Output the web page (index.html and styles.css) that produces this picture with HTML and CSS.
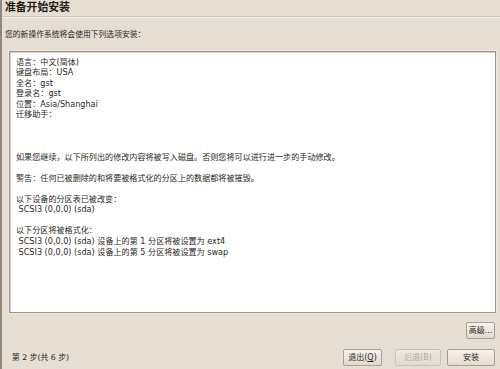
FILE: index.html
```html
<!DOCTYPE html>
<html lang="zh-CN">
<head>
<meta charset="utf-8">
<title>准备开始安装</title>
<link rel="stylesheet" href="styles.css">
</head>
<body>
<div class="window">
  <div class="header">准备开始安装</div>
  <div class="subtitle">您的新操作系统将会使用下列选项安装：</div>
  <div class="summary">
    <div class="line">语言：中文(简体)</div>
    <div class="line">键盘布局：USA</div>
    <div class="line">全名：gst</div>
    <div class="line">登录名：gst</div>
    <div class="line">位置：Asia/Shanghai</div>
    <div class="line">迁移助手：</div>
    <div class="line"></div>
    <div class="line"></div>
    <div class="line"></div>
    <div class="line">如果您继续，以下所列出的修改内容将被写入磁盘。否则您将可以进行进一步的手动修改。</div>
    <div class="line"></div>
    <div class="line">警告：任何已被删除的和将要被格式化的分区上的数据都将被摧毁。</div>
    <div class="line"></div>
    <div class="line">以下设备的分区表已被改变：</div>
    <div class="line"> SCSI3 (0,0,0) (sda)</div>
    <div class="line"></div>
    <div class="line">以下分区将被格式化：</div>
    <div class="line"> SCSI3 (0,0,0) (sda) 设备上的第 1 分区将被设置为 ext4</div>
    <div class="line"> SCSI3 (0,0,0) (sda) 设备上的第 5 分区将被设置为 swap</div>
  </div>
  <div class="advanced-row">
    <button class="btn btn-advanced">高级...</button>
  </div>
  <div class="footer">
    <div class="step">第 2 步(共 6 步)</div>
    <div class="actions">
      <button class="btn btn-quit">退出(<u>Q</u>)</button>
      <button class="btn btn-back" disabled>后退(B)</button>
      <button class="btn btn-install">安装</button>
    </div>
  </div>
</div>
</body>
</html>
```

FILE: styles.css
```css
html, body {
  margin: 0;
  padding: 0;
}

body {
  width: 500px;
  height: 369px;
  overflow: hidden;
  font-family: "DejaVu Sans", "Noto Sans CJK SC", sans-serif;
  color: #2b2723;
}

.window {
  width: 500px;
  height: 369px;
  box-sizing: border-box;
  border-left: 2px solid #8e8881;
  background: #e6ddd3;
  display: flex;
  flex-direction: column;
}

.header {
  height: 16px;
  line-height: 16px;
  padding-left: 3px;
  font-size: 10.8px;
  font-weight: bold;
  color: #1e1b18;
  border-bottom: 1px solid #cfc5b9;
  box-shadow: 0 1px 0 #f3eee8;
}

.subtitle {
  margin-top: 12px;
  padding-left: 3px;
  font-size: 7.8px;
  line-height: 11px;
  height: 11px;
}

.summary {
  margin: 11px 4px 0 7px;
  height: 262px;
  box-sizing: border-box;
  border: 1px solid #9b958e;
  box-shadow: 0 0 0 1px #efe9e2, inset 1px 1px 0 #d9d2c9;
  background: #ffffff;
  padding: 4.7px 6px 0 6px;
  font-size: 8.1px;
}

.line {
  height: 10.56px;
  line-height: 10.56px;
  white-space: pre;
}

.advanced-row {
  display: flex;
  justify-content: flex-end;
  margin-top: 9px;
  padding-right: 5px;
}

.btn {
  font-family: "DejaVu Sans", "Noto Sans CJK SC", sans-serif;
  font-size: 8px;
  color: #2b2723;
  height: 17px;
  padding: 0;
  box-sizing: border-box;
  border: 1px solid #a9a096;
  border-radius: 2px;
  background: linear-gradient(#f5f1ec, #e2dad0);
  line-height: 15px;
}

.btn u {
  text-decoration-thickness: 1px;
}

.btn-advanced {
  width: 29px;
}

.footer {
  display: flex;
  align-items: center;
  justify-content: space-between;
  margin-top: 10px;
  padding: 0 5px 0 10px;
}

.step {
  font-size: 7.8px;
  line-height: 17px;
}

.actions {
  display: flex;
  gap: 0;
}

.btn-quit {
  width: 39px;
  margin-right: 13px;
}

.btn-back {
  width: 46px;
  margin-right: 6px;
  color: #b2a99f;
  border-color: #c9c0b6;
  background: linear-gradient(#eee8e1, #e4dcd2);
}

.btn-install {
  width: 48px;
  border-color: #a89d92;
  background: linear-gradient(#f7f1ea, #e6dbcf);
}
```
